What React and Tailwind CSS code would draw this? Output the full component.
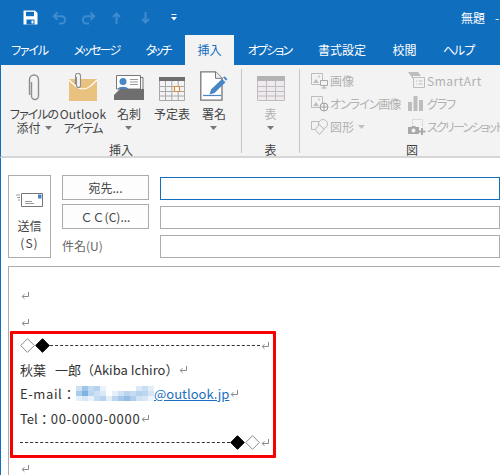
import React from "react";

const jp = "[font-family:'Noto_Sans_CJK_JP','Noto_Sans',sans-serif]";
const palt = "[font-feature-settings:'palt']";

const tabs = [
  { label: "ファイル", w: "w-[57px]", t: "tracking-[-1.2px]" },
  { label: "メッセージ", w: "w-[77px]", t: "tracking-[-1.8px]" },
  { label: "タッチ", w: "w-[46px]", t: "tracking-[-2px]" },
  { label: "挿入", w: "w-[49px] ml-[4px]", t: "", active: true },
  { label: "オプション", w: "w-[71px]", t: "tracking-[-1.8px]" },
  { label: "書式設定", w: "w-[74px]", t: "" },
  { label: "校閲", w: "w-[51px]", t: "" },
  { label: "ヘルプ", w: "w-[57px]", t: "tracking-[-1px]" },
];

const mosaic = [
  ["#cfe2f5", "#9fc5ea", "#c3dbf2", "#b5d2ee", "#eaf3fb", "#fff", "#fff", "#fff", "#fff", "#fff", "#dbe9f7", "#c8def3", "#e2eef9"],
  ["#a9cbec", "#7fb1e2", "#bad5f0", "#cde0f4", "#dbe9f7", "#fff", "#e4eff9", "#cfe1f4", "#bad5ef", "#c6dcf2", "#b5d2ee", "#bcd6f0", "#d5e5f6"],
  ["#e6f0fa", "#d8e7f6", "#e9f2fb", "#c5dbf2", "#b8d3ef", "#e3eef9", "#bcd6f0", "#a5c8ea", "#94bde6", "#b1cfed", "#cfe1f5", "#d8e7f6", "#eef5fc"],
];

const Tri = ({ className = "" }) => (
  <svg width="7" height="4" viewBox="0 0 7 4" className={className}>
    <path d="M0 0h7L3.5 4z" fill="currentColor" />
  </svg>
);

const ReturnMark = () => (
  <svg width="9" height="9" viewBox="0 0 9 9" className="inline-block ml-px shrink-0 text-[#888]">
    <path d="M7.500 1v4.500H1.500M3.500 3.200 1.200 5.500l2.300 2.300" fill="none" stroke="currentColor" strokeWidth="1" />
  </svg>
);

const Diamond = ({ filled }) => (
  <svg width="15" height="15" viewBox="0 0 15 15" className="shrink-0">
    <path d="M7.500.7 14.300 7.500 7.500 14.300.7 7.500z" fill={filled ? "#000" : "#fff"} stroke={filled ? "#000" : "#8a8a8a"} strokeWidth="1" />
  </svg>
);

const Dashes = () => <div className="flex-1 border-t border-dashed border-[#333]" />;

const QatIcons = () => (
  <div className="flex items-center">
    <svg width="15" height="15" viewBox="0 0 15 15" className="ml-[23px]">
      <path d="M.5.500h11.500l2.500 2.500v11.500H.5z" fill="#fff" />
      <path d="M3 1.800h8v4.400H3z" fill="#106ebe" />
      <path d="M3.500 9.500h8v5h-8z" fill="#106ebe" />
      <path d="M8.500 10.500h2v3h-2z" fill="#fff" />
    </svg>
    <svg width="15" height="14" viewBox="0 0 15 14" className="ml-[14px] text-[#3f8bcf]">
      <path d="M5.500 1.500 1.800 5.200l3.700 3.700M2 5.200h7.500a3.600 3.600 0 0 1 0 7.300H7" fill="none" stroke="currentColor" strokeWidth="2" />
    </svg>
    <svg width="15" height="14" viewBox="0 0 15 14" className="ml-[14px] text-[#3f8bcf]">
      <path d="M9.500 1.500l3.700 3.700-3.700 3.700M13 5.200H5.500a3.600 3.600 0 0 0 0 7.300H8" fill="none" stroke="currentColor" strokeWidth="2" />
    </svg>
    <svg width="9" height="12" viewBox="0 0 9 12" className="ml-[16px] text-[#3f8bcf]">
      <path d="M4.500 12V2M1 5l3.500-3.500L8 5" fill="none" stroke="currentColor" strokeWidth="2" />
    </svg>
    <svg width="9" height="12" viewBox="0 0 9 12" className="ml-[20px] text-[#3f8bcf]">
      <path d="M4.500 0v10M1 7l3.500 3.500L8 7" fill="none" stroke="currentColor" strokeWidth="2" />
    </svg>
    <svg width="6" height="7" viewBox="0 0 6 7" className="ml-[21px] text-white">
      <path d="M.5 0h5v1h-5zM0 3h6L3 6.500z" fill="currentColor" />
    </svg>
  </div>
);

const Clip = () => (
  <svg width="14" height="28" viewBox="0 0 14 28">
    <path d="M3.500 8v14a3.500 3.500 0 0 0 7 0V5.500a4.500 4.500 0 0 0-9 0V21" fill="none" stroke="#8e8e8e" strokeWidth="1.400" transform="translate(1 1)" />
  </svg>
);

const OutlookItem = () => (
  <svg width="30" height="28" viewBox="0 0 30 28">
    <path d="M1 6h28v22H1z" fill="#e9c27f" />
    <path d="M1 7c6 6 9 9 14 9s9-4 14-9" fill="none" stroke="#fff" strokeWidth="1.200" />
    <path d="M8.500 4v8.500a2 2 0 0 0 4 0V2.800a2.500 2.500 0 0 0-5 0V11" fill="#f3f3f3" stroke="#8e8e8e" strokeWidth="1.100" />
  </svg>
);

const CardIcon = () => (
  <svg width="30" height="26" viewBox="0 0 30 26">
    <path d="M5 2.500h24V18" fill="none" stroke="#777" />
    <path d="M2.500.5h24V14h-24z" fill="#fff" stroke="#777" />
    <circle cx="9" cy="6.500" r="3.500" fill="#4a86c5" />
    <path d="M4 14c0-3 10-3 10 0z" fill="#4a86c5" />
    <path d="M16 4.500h8M16 7h8M16 9.500h8" stroke="#999" />
    <path d="M6 14h24v11H0V20z" fill="#6e6e6e" />
  </svg>
);

const CalendarIcon = () => (
  <svg width="26" height="24" viewBox="0 0 26 24">
    <path d="M0 0h26v4H0z" fill="#6e6e6e" />
    <path d="M.5 4v19.500h25V4M.5 9.500h25M.5 14.500h25M.5 19h25M6.500 4v19.500M12.800 4v19.500M19.200 4v19.500" fill="none" stroke="#a8a8a8" />
    <path d="M15.500 9.500h5v5h-5z" fill="#fff" stroke="#e08a34" strokeWidth="1.200" />
  </svg>
);

const SignatureIcon = () => (
  <svg width="28" height="30" viewBox="0 0 28 30">
    <path d="M.8.800h14.700l6.500 6.500v21.900H.8z" fill="#fff" stroke="#777" strokeWidth="1.300" />
    <path d="M15.500.800v6.500H22" fill="#eee" stroke="#777" />
    <path d="M3 24.500h18" stroke="#4a86c5" strokeWidth="1.200" />
    <path d="M11 18.500 22 8l3.500 3.200L14.500 22l-5 1.500z" fill="#4a86c5" />
    <path d="M23 6.500l1.500-1.300 3 3-1.400 1.300z" fill="#4a86c5" />
  </svg>
);

const TableIcon = () => (
  <svg width="28" height="25" viewBox="0 0 28 25">
    <path d="M0 0h28v5H0z" fill="#b5b2b2" />
    <path d="M.5 5v19.500h27V5" fill="#efeaef" stroke="#c0bcbc" />
    <path d="M.5 10.500h27M.5 15.500h27M.5 20h27M9.500 5v19.500M18.500 5v19.500" stroke="#c0bcbc" />
  </svg>
);

const ImageSmall = ({ badge }) => (
  <svg width="18" height="17" viewBox="0 0 18 17" className="shrink-0">
    <path d="M.5 1.500h11v11H.5z" fill="#f3f3f3" stroke="#bdbdbd" />
    <path d="M2 11l3-4 3 4z" fill="#bdbdbd" />
    <circle cx="8" cy="4.500" r="1.200" fill="#cfcfcf" />
    {badge === "pc" && <path d="M9.500 8.500h7v5h-7zM13 13.500V16M10.500 16h5" fill="#f3f3f3" stroke="#a8a8a8" />}
    {badge === "globe" && <g fill="#f3f3f3" stroke="#a0a0a0"><circle cx="13" cy="12" r="4" /><path d="M9 12h8M13 8v8" /></g>}
  </svg>
);

const ShapesIcon = () => (
  <svg width="18" height="16" viewBox="0 0 18 16" className="shrink-0">
    <path d="M.5 2.500h7v8h-7z" fill="none" stroke="#bdbdbd" />
    <circle cx="12" cy="5" r="4.500" fill="#f3f3f3" stroke="#bdbdbd" />
    <path d="M8.500 5.500l4.500 5-4.500 5-4.500-5z" fill="#f3f3f3" stroke="#b5b5b5" />
  </svg>
);

const SmartArtIcon = () => (
  <svg width="18" height="17" viewBox="0 0 18 17" className="shrink-0">
    <path d="M0 0h10l3 4H5v3z" fill="#bdbdbd" />
    <path d="M5.500 5.500h11v10h-11z" fill="#f3f3f3" stroke="#bdbdbd" />
    <path d="M8 9h1M8 12h1M10.500 9h4M10.500 12h4" stroke="#bdbdbd" />
  </svg>
);

const ChartIcon = () => (
  <svg width="15" height="15" viewBox="0 0 15 15" className="shrink-0 mr-[3px]">
    <path d="M0 6h4v9H0zM5.500 0h4v15h-4zM11 4h4v11h-4z" fill="#bdbdbd" />
  </svg>
);

const ScreenshotIcon = () => (
  <svg width="18" height="16" viewBox="0 0 18 16" className="shrink-0">
    <path d="M4.500.500h10v7" fill="none" stroke="#c4c4c4" strokeDasharray="1 1" />
    <path d="M4.500.500v5" fill="none" stroke="#c4c4c4" strokeDasharray="1 1" />
    <path d="M0 8h3l1-1h3l1 1h3v7H0z" fill="#a8a8a8" />
    <circle cx="5.500" cy="11.500" r="2" fill="#f3f3f3" />
    <path d="M14 9v7M10.500 12.500h7" stroke="#a8a8a8" strokeWidth="2" />
  </svg>
);

const BigButton = ({ icon, lines, w, arrow, disabled }) => (
  <div className={`flex flex-col items-center shrink-0 ${w} ${disabled ? "text-[#b1b1b1]" : "text-[#444]"}`}>
    <div className="h-[32px] shrink-0 flex items-end justify-center">{icon}</div>
    <div className="mt-[6px] shrink-0 text-[12px] leading-[14px] text-center whitespace-nowrap">
      {lines.map((l, i) => (
        <div key={i} className="flex items-center justify-center gap-[4px] h-[14px]">{l}</div>
      ))}
      {arrow && <div className="h-[14px] flex items-center justify-center"><Tri className="text-[#777]" /></div>}
    </div>
  </div>
);

const SmallButton = ({ icon, label, arrow, t = "tracking-[-1px]" }) => (
  <div className="flex items-center gap-[1px] h-[23px] text-[12px] text-[#b1b1b1] whitespace-nowrap">
    {icon}
    <span className={t}>{label}</span>
    {arrow && <Tri className="ml-[3px] text-[#c0c0c0]" />}
  </div>
);

const Group = ({ label, w, children }) => (
  <div className={`${w} h-[84px] shrink-0 flex flex-col border-r border-[#c6c6c6] last:border-r-0 mt-[4px]`}>
    <div className="h-[75px] shrink-0 flex">{children}</div>
    <div className="h-[12px] shrink-0 flex items-center justify-center text-[12px] text-[#444]">{label}</div>
  </div>
);

const FieldButton = ({ children }) => (
  <div className="h-[25px] w-[87px] border border-[#ababab] bg-[#fdfdfd] flex items-center justify-center text-[12px] text-[#444]">
    {children}
  </div>
);

const BodyLine = ({ children, className = "" }) => (
  <div className={`h-[24.400px] flex items-center text-[13px] text-[#333] whitespace-nowrap ${className}`}>{children}</div>
);

export default function App() {
  return (
    <div className={`w-[500px] h-[475px] overflow-hidden bg-white ${jp}`}>
      {/* title bar */}
      <div className="h-[35px] bg-[#106ebe] flex items-center justify-between">
        <QatIcons />
        <div className="flex items-center text-[12px] text-white whitespace-nowrap">
          <span>無題</span>
          <span className="ml-[10px] w-[5px]">-</span>
        </div>
      </div>

      {/* tabs */}
      <div className={`h-[30px] bg-[#106ebe] flex pl-[1px] ${palt}`}>
        {tabs.map((t) => (
          <div
            key={t.label}
            className={`${t.w} ${t.t} shrink-0 flex items-center justify-center text-[12px] whitespace-nowrap ${
              t.active ? "bg-[#f3f3f3] text-[#106ebe]" : "text-white"
            }`}
          >
            {t.label}
          </div>
        ))}
      </div>

      {/* ribbon */}
      <div className={`h-[93px] overflow-hidden bg-[#f3f3f3] border-b-2 border-[#d6d6d6] border-l border-l-[#106ebe] flex ${palt}`}>
        <Group label="挿入" w="w-[241px]">
          <div className="flex pl-[8px]">
            <BigButton w="w-[50px]" icon={<Clip />} lines={[<span key="f" className="tracking-[-1px]">ファイルの</span>, <React.Fragment key="a">添付<Tri className="text-[#777]" /></React.Fragment>]} />
            <BigButton w="w-[48px]" icon={<OutlookItem />} lines={[<span key="o" className="tracking-[0.2px]">Outlook</span>, <span key="i" className="tracking-[-1px]">アイテム</span>]} />
            <BigButton w="w-[44px]" icon={<CardIcon />} lines={["名刺"]} arrow />
            <BigButton w="w-[42px]" icon={<CalendarIcon />} lines={["予定表"]} />
            <BigButton w="w-[42px]" icon={<SignatureIcon />} lines={["署名"]} arrow />
          </div>
        </Group>
        <Group label="表" w="w-[58px]">
          <div className="w-full">
            <BigButton w="w-full" disabled icon={<TableIcon />} lines={["表"]} arrow />
          </div>
        </Group>
        <Group label="図" w="w-[224px]">
          <div className="flex pl-[11px]">
            <div className="w-[97px] shrink-0">
              <SmallButton icon={<ImageSmall badge="pc" />} label="画像" t="" />
              <SmallButton icon={<ImageSmall badge="globe" />} label="オンライン画像" />
              <SmallButton icon={<ShapesIcon />} label="図形" arrow t="" />
            </div>
            <div className="shrink-0">
              <SmallButton icon={<SmartArtIcon />} label="SmartArt" t="tracking-[0.5px]" />
              <SmallButton icon={<ChartIcon />} label="グラフ" />
              <SmallButton icon={<ScreenshotIcon />} label="スクリーンショット" t="tracking-[-1.800px]" />
            </div>
          </div>
        </Group>
      </div>

      {/* compose fields */}
      <div className="border-l border-[#106ebe] h-[317px] flex flex-col">
        <div className="flex pl-[7px] pt-[17px] h-[108px] shrink-0">
          <div className="w-[43px] h-[83px] border border-[#ababab] flex flex-col items-center text-[12px] leading-[17px] text-[#444]">
            <svg width="28" height="15" viewBox="0 0 28 15" className="mt-[17px] mb-[9px]">
              <path d="M5.500.500h21v13h-21z" fill="#fff" stroke="#777" />
              <path d="M22 1.500h3.500v4H22z" fill="#4a86c5" />
              <path d="M9 8.500h7M9 10.500h9M0 2h4M1 4.500h3M2 7h2" stroke="#999" />
            </svg>
            <span>送信</span>
            <span className="tracking-[1px]">(S)</span>
          </div>
          <div className="ml-[11px] flex flex-col gap-[4px] w-[87px] shrink-0">
            <FieldButton>宛先...</FieldButton>
            <FieldButton>ＣＣ(C)...</FieldButton>
            <div className="h-[25px] flex items-center text-[12px] text-[#666]">件名(U)</div>
          </div>
          <div className="ml-[11px] flex-1 flex flex-col gap-[6px] pt-[2px]">
            <div className="h-[23px] border border-[#106ebe]" />
            <div className="h-[23px] border border-[#ababab]" />
            <div className="h-[23px] border border-[#ababab]" />
          </div>
        </div>

        {/* message body */}
        <div className="ml-[7px] flex-1 border-t border-l border-[#ababab] pl-[11px] pt-[22px]">
          <div className="h-[12px] flex items-center"><ReturnMark /></div>
          <div className="h-[16px]" />
          <div className="h-[12px] flex items-center -mt-[1px]"><ReturnMark /></div>
          <div className="-ml-[10px] mt-[3px] w-[266px] h-[127px] border-[3px] border-[#f60000] rounded-[1px] pl-[7px] pr-[3px]">
            <BodyLine className="-mt-[1px]">
              <Diamond /><Diamond filled /><Dashes /><ReturnMark />
            </BodyLine>
            <BodyLine>秋葉<span className="ml-[9px]">一郎（Akiba Ichiro）</span><ReturnMark /></BodyLine>
            <BodyLine>
              <span className="tracking-[0.6px]">E-mail：</span>
              <span className="flex flex-col shrink-0">
                {mosaic.map((row, i) => (
                  <span key={i} className="flex">
                    {row.map((c, j) => (
                      <span key={j} className="w-[6px] h-[5px]" style={{ backgroundColor: c }} />
                    ))}
                  </span>
                ))}
              </span>
              <span className="text-[#1c6fc0] underline">@outlook.jp</span>
              <ReturnMark />
            </BodyLine>
            <BodyLine>Tel：<span className="tracking-[0.7px]">00-0000-0000</span><ReturnMark /></BodyLine>
            <BodyLine>
              <Dashes /><Diamond filled /><Diamond /><ReturnMark />
            </BodyLine>
          </div>
          <div className="h-[12px] mt-[4px] flex items-center"><ReturnMark /></div>
        </div>
      </div>
    </div>
  );
}
